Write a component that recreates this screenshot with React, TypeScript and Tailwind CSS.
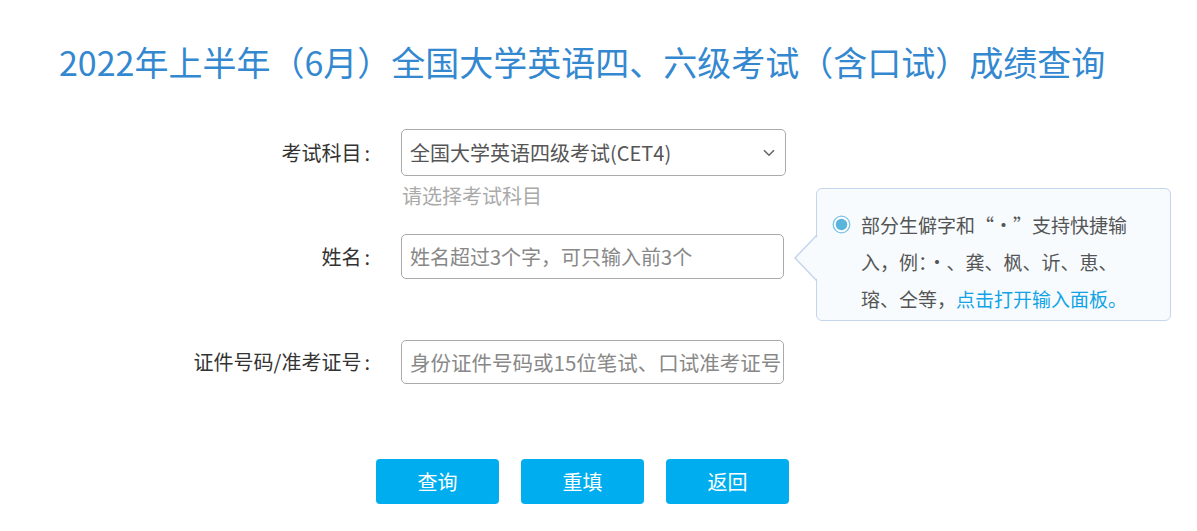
import React from 'react'

const FormRow = ({ label, children, className }: { label: string; children: React.ReactNode; className?: string }) => (
  <div className={'relative flex items-center ' + (className ?? '')}>
    <label className="w-[372px] text-right text-[20px] text-[#333]">
      {label}
      <span className="ml-[3px] mr-[2px]">:</span>
    </label>
    <div className="ml-[29px]">{children}</div>
  </div>
)

const Tip = () => (
  <div className="absolute left-[816px] top-[-46px] h-[133px] w-[355px] rounded-[6px] border border-[#c5d5ec] bg-[#f7fbfe] pl-[15px] pr-[10px] pt-[17px]">
    <svg className="absolute left-[-23px] top-[46px]" width="25" height="46" viewBox="0 0 25 46">
      <polygon points="25,0 1,23 25,46" fill="#f7fbfe" />
      <polyline points="23,0 1,23 23,46" fill="none" stroke="#c5d5ec" strokeWidth="1.5" />
    </svg>
    <div className="flex items-start">
      <svg className="mt-[9px] shrink-0" width="19" height="19" viewBox="0 0 19 19">
        <circle cx="9.5" cy="9.5" r="8.3" fill="#fff" stroke="#7ec2e4" strokeWidth="1.3" />
        <circle cx="9.5" cy="9.5" r="5.8" fill="#5ab4dc" />
      </svg>
      <p className="ml-[10px] w-[278px] text-[19px] leading-[37px] text-[#555]">
        部分生僻字和“·”支持快捷输入，例：·、龚、枫、䜣、恵、瑢、仝等，
        <a className="text-[#12a3e6]">点击打开输入面板。</a>
      </p>
    </div>
  </div>
)

export default function App() {
  return (
    <div className="min-h-screen bg-white font-['Noto_Sans_CJK_SC','Microsoft_YaHei',sans-serif]">
      <h1 className="pl-[59px] pt-[40px] text-[34px] leading-[44px] text-[#3388d0]">
        2022年上半年（6月）全国大学英语四、六级考试（含口试）成绩查询
      </h1>

      <div className="mt-[45px] flex flex-col">
        <FormRow label="考试科目">
          <div className="flex h-[47px] w-[385px] items-center justify-between rounded-[5px] border border-[#aaa] pl-[8px] pr-[10px] text-[20px] text-[#555]">
            <span>全国大学英语四级考试(CET4)</span>
            <svg width="12" height="8" viewBox="0 0 12 8">
              <path d="M1 1.2 L6 6.2 L11 1.2" fill="none" stroke="#666" strokeWidth="1.6" />
            </svg>
          </div>
        </FormRow>
        <div className="ml-[402px] mt-[8px] text-[20px] leading-[24px] text-[#aaa]">请选择考试科目</div>

        <FormRow label="姓名" className="mt-[26px]">
          <input
            className="h-[45px] w-[383px] rounded-[5px] border border-[#aaa] px-[8px] text-[20px] text-[#555] outline-none placeholder:text-[#888]"
            placeholder="姓名超过3个字，可只输入前3个"
          />
          <Tip />
        </FormRow>

        <FormRow label="证件号码/准考证号" className="mt-[61px]">
          <input
            className="h-[44px] w-[383px] rounded-[5px] border border-[#aaa] pl-[8px] pr-[2px] text-[20.5px] text-[#555] outline-none placeholder:text-[#888]"
            placeholder="身份证件号码或15位笔试、口试准考证号"
          />
        </FormRow>
      </div>

      <div className="mt-[75px] flex gap-[22px] pl-[376px]">
        {['查询', '重填', '返回'].map((t) => (
          <button key={t} className="h-[45px] w-[123px] rounded-[4px] bg-[#00aeef] text-[20px] text-white">
            {t}
          </button>
        ))}
      </div>
    </div>
  )
}
